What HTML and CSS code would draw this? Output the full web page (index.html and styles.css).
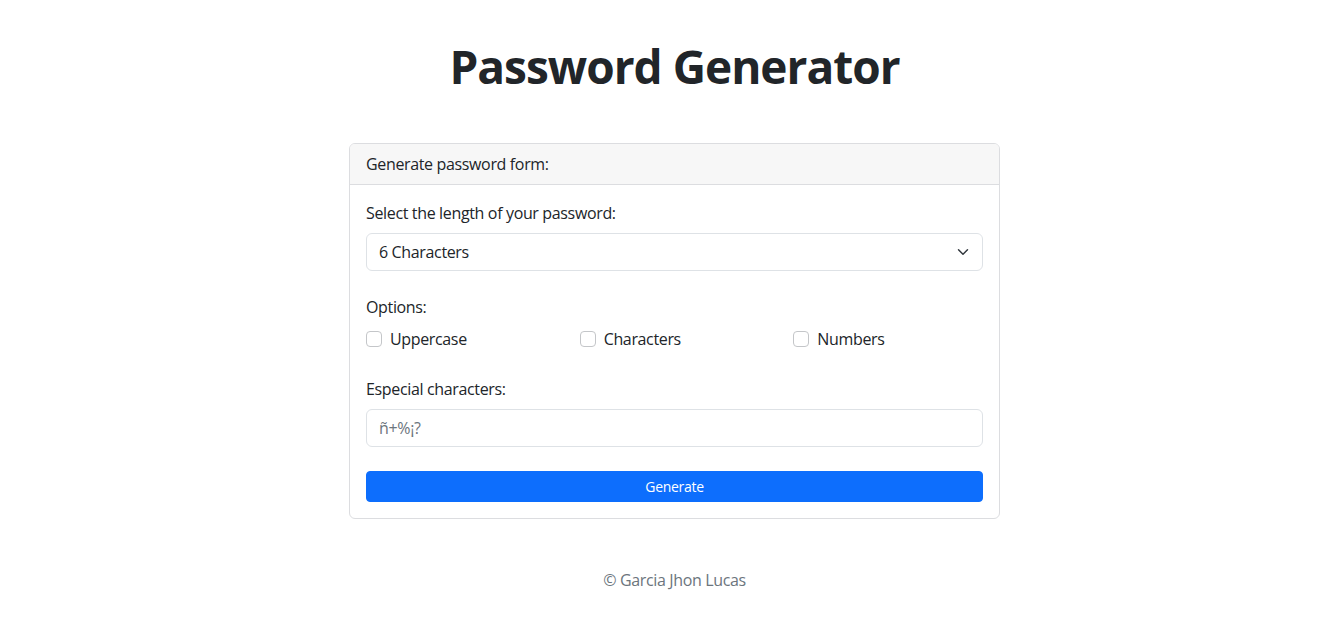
FILE: index.html
```html
<!DOCTYPE html>
<html lang="en">
<head>
<meta charset="utf-8">
<title>Password Generator</title>
<link rel="stylesheet" href="styles.css">
</head>
<body>
<main class="page">
  <h1 class="title">Password Generator</h1>
  <section class="card">
    <div class="card-header">Generate password form:</div>
    <form class="card-body">
      <label class="label" for="length">Select the length of your password:</label>
      <div class="select-wrap">
        <select id="length" class="select">
          <option>6 Characters</option>
        </select>
        <svg class="chevron" viewBox="0 0 16 16" width="16" height="12"><path d="m2 5 6 6 6-6" fill="none" stroke="#343a40" stroke-linecap="round" stroke-linejoin="round" stroke-width="2"/></svg>
      </div>
      <div class="label options-label">Options:</div>
      <div class="options">
        <label class="check"><input type="checkbox" class="check-input"><span>Uppercase</span></label>
        <label class="check"><input type="checkbox" class="check-input"><span>Characters</span></label>
        <label class="check"><input type="checkbox" class="check-input"><span>Numbers</span></label>
      </div>
      <label class="label special-label" for="special">Especial characters:</label>
      <input id="special" class="input" type="text" placeholder="ñ+%¡?">
      <button type="button" class="btn">Generate</button>
    </form>
  </section>
  <footer class="footer">© Garcia Jhon Lucas</footer>
</main>
</body>
</html>
```
FILE: styles.css
```css
* { box-sizing: border-box; }
html, body { margin: 0; padding: 0; background: #fff; }
body {
  font-family: "Open Sans", "Noto Sans", sans-serif;
  font-size: 16px;
  line-height: 1.5;
  letter-spacing: -0.35px;
  color: #212529;
}
.page {
  padding-left: 6px;
  display: flex;
  flex-direction: column;
  align-items: center;
}
.title {
  margin: 39px 0 0;
  font-size: 46px;
  line-height: 55px;
  font-weight: 700;
  letter-spacing: -1px;
}
.card {
  margin-top: 49px;
  width: 651px;
  border: 1px solid #dcdde0;
  border-radius: 6px;
  overflow: hidden;
}
.card-header {
  padding: 8px 16px;
  background: #f7f7f7;
  border-bottom: 1px solid #dcdde0;
}
.card-body {
  padding: 16px;
  display: flex;
  flex-direction: column;
  margin: 0;
}
.label { display: block; }
.select-wrap {
  position: relative;
  margin-top: 8px;
}
.select {
  appearance: none;
  -webkit-appearance: none;
  width: 100%;
  height: 38px;
  padding: 6px 36px 6px 12px;
  font: inherit;
  letter-spacing: inherit;
  color: #212529;
  background: #fff;
  border: 1px solid #dee2e6;
  border-radius: 6px;
}
.chevron {
  position: absolute;
  right: 12px;
  top: 13px;
  pointer-events: none;
}
.options-label { margin-top: 24px; }
.options {
  margin-top: 8px;
  display: grid;
  grid-template-columns: repeat(3, 1fr);
  margin-left: -12px;
  margin-right: -12px;
}
.check {
  display: flex;
  align-items: center;
  gap: 8px;
  padding: 0 12px;
  height: 24px;
  margin-bottom: 2px;
}
.check-input {
  appearance: none;
  -webkit-appearance: none;
  width: 16px;
  height: 16px;
  margin: 0;
  border: 1px solid #c4c6c9;
  border-radius: 4px;
  background: #fff;
  flex: none;
}
.special-label { margin-top: 24px; }
.input {
  margin-top: 8px;
  height: 38px;
  padding: 6px 12px;
  font: inherit;
  letter-spacing: inherit;
  color: #212529;
  border: 1px solid #dee2e6;
  border-radius: 6px;
}
.input::placeholder { color: #6c757d; }
.btn {
  margin-top: 24px;
  height: 31px;
  padding: 4px 8px;
  font: inherit;
  font-size: 14px;
  line-height: 21px;
  letter-spacing: -0.3px;
  color: #fff;
  background: #0d6efd;
  border: 1px solid #0d6efd;
  border-radius: 4px;
}
.footer {
  margin-top: 49px;
  color: #6c757d;
}
```
